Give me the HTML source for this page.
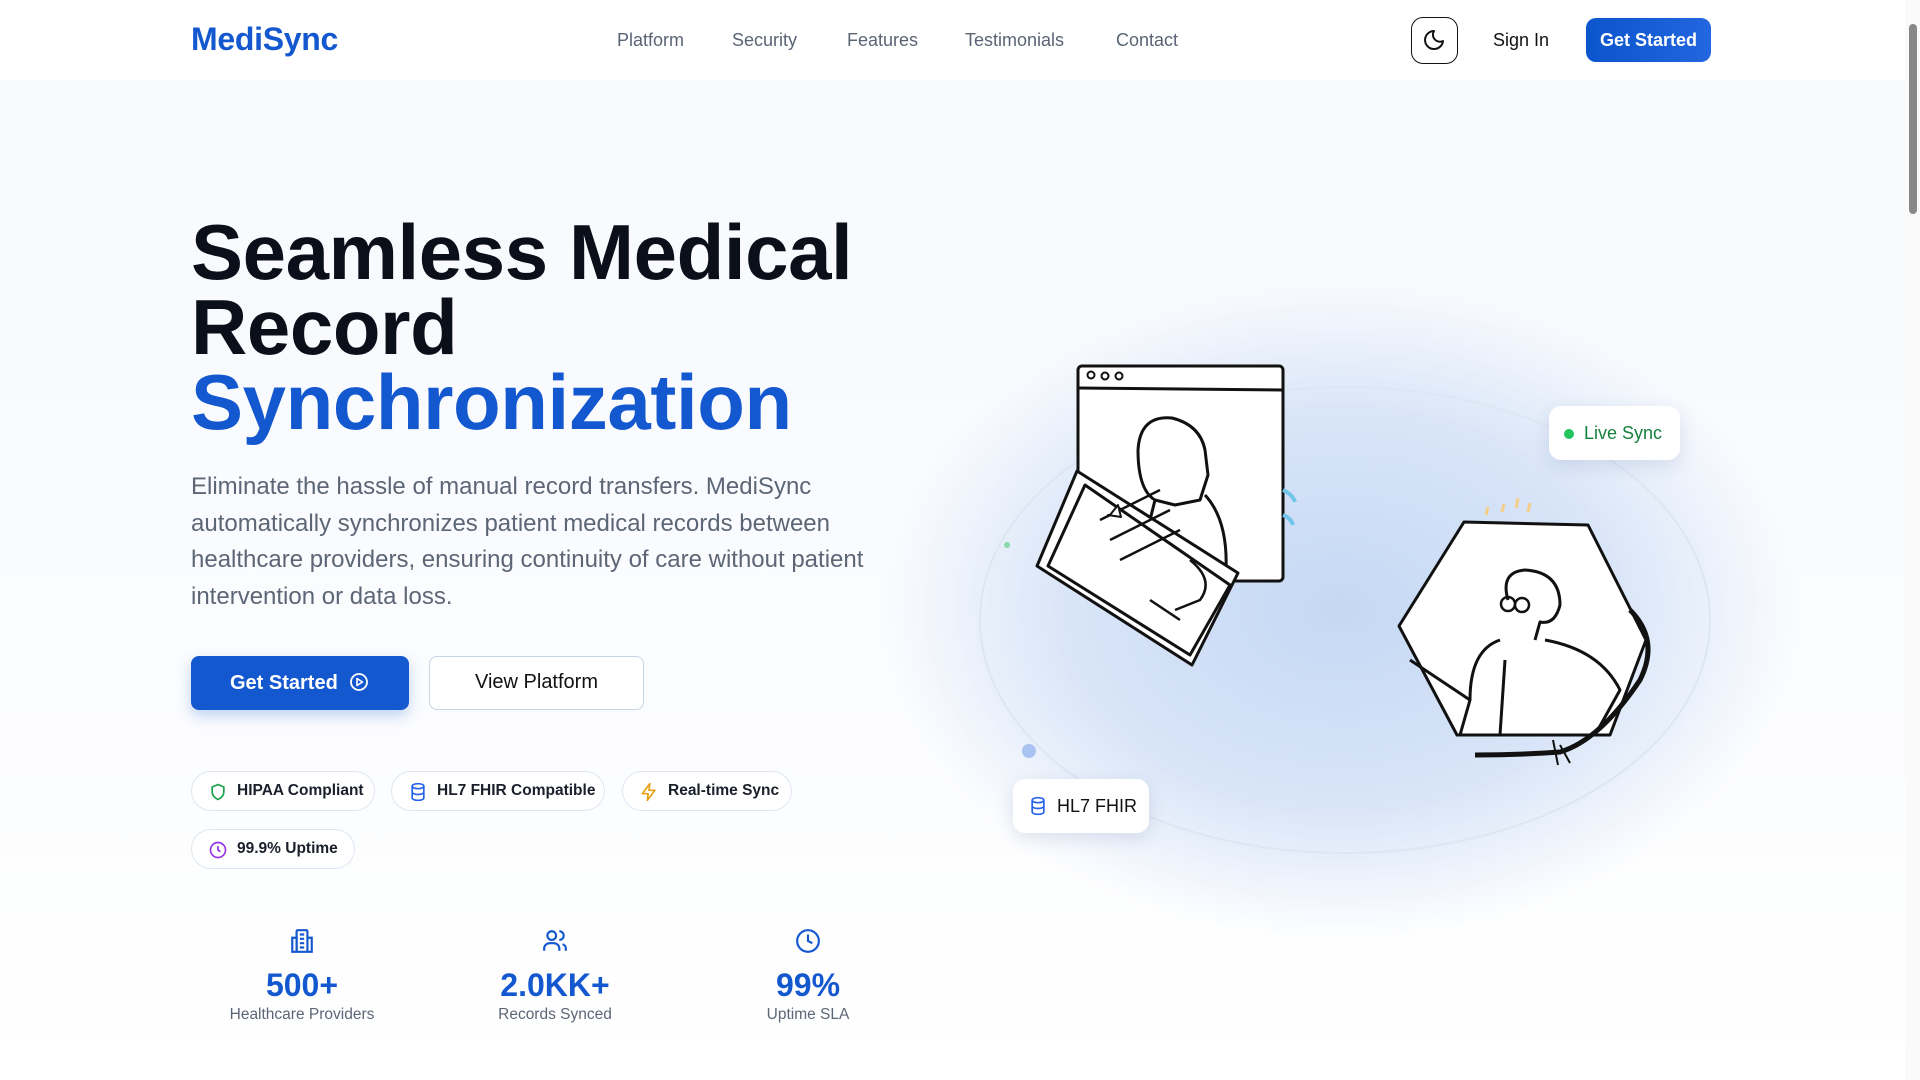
<!DOCTYPE html>
<html><head><meta charset="utf-8"><style>
*{margin:0;padding:0;box-sizing:border-box}
html,body{width:1920px;height:1080px;overflow:hidden}
body{font-family:"Liberation Sans",sans-serif;background:#fff;position:relative;color:#0f172a}
.bg{position:absolute;left:0;top:80px;width:1905px;height:1000px;background:linear-gradient(180deg,#f7f9fd 0%,#fbfcfe 60%,#fff 100%)}
.scroll{position:absolute;right:0;top:0;width:15px;height:1080px;background:#fafafa}
.scroll .th{position:absolute;left:4px;top:24px;width:8px;height:190px;background:#888;border-radius:4px}
nav{position:absolute;left:0;top:0;width:1905px;height:80px;background:#fff}
.logo{position:absolute;left:191px;top:21px;font-size:32px;font-weight:bold;color:#1458d0;letter-spacing:-0.3px}
.links a{position:absolute;top:30px;font-size:18px;color:#5b6475;text-decoration:none}
.moon{position:absolute;left:1411px;top:17px;width:47px;height:47px;border:1.5px solid #111;border-radius:12px}
.signin{position:absolute;left:1493px;top:30px;font-size:18px;color:#111}
.gs{position:absolute;left:1586px;top:18px;width:125px;height:44px;border-radius:10px;background:linear-gradient(90deg,#0b55cc,#2266e0);color:#fff;font-size:18px;font-weight:bold;text-align:center;line-height:44px}
h1{position:absolute;left:191px;top:215px;font-size:78px;line-height:75px;font-weight:bold;letter-spacing:-0.4px;color:#0b0f1a}
h1 span{color:#1458d0}
.p{position:absolute;left:191px;top:469px;font-size:24px;line-height:36.7px;color:#5d6676;white-space:nowrap}
.b1{position:absolute;left:191px;top:656px;width:218px;height:54px;border-radius:8px;background:#1458d0;color:#fff;font-size:20px;font-weight:bold;line-height:54px;padding-left:39px;box-shadow:0 6px 14px rgba(20,88,208,.25)}
.b2{position:absolute;left:429px;top:656px;width:215px;height:54px;border-radius:8px;border:1.5px solid #c8d3e6;background:#fff;font-size:20px;line-height:51px;text-align:center;color:#111}
.chip{position:absolute;height:40px;border:1px solid #dfe6f2;border-radius:20px;background:#fff;font-size:15.5px;font-weight:bold;color:#1a1f2b;line-height:38px;padding-left:45px}
.chip svg{position:absolute;left:16px;top:10px}
.stat{position:absolute;width:240px;text-align:center}
.stat .n{font-size:32px;font-weight:bold;color:#1458d0;margin-top:8px}
.stat .l{font-size:15.5px;color:#5d6676;margin-top:2px}
.card{position:absolute;background:#fff;border-radius:12px;box-shadow:0 6px 18px rgba(30,60,120,.12);font-size:18px}
</style></head><body>
<div class="bg"></div>
<svg style="position:absolute;left:0;top:0" width="1905" height="1080">
<defs>
<radialGradient id="g" cx="0.5" cy="0.5" r="0.5"><stop offset="0" stop-color="#c5d8f4"/><stop offset="0.6" stop-color="#d9e5f8"/><stop offset="1" stop-color="#dbe7f8" stop-opacity="0"/></radialGradient>
</defs>
<ellipse cx="1340" cy="610" rx="460" ry="330" fill="url(#g)"/>
<ellipse cx="1345" cy="620" rx="365" ry="233" fill="none" stroke="#dde6f3" stroke-width="2"/>
<circle cx="1007" cy="545" r="3" fill="#86dba6"/>
<circle cx="1029" cy="751" r="7" fill="#a9c3f2"/>
<g stroke="#111" stroke-width="3" fill="#fff" stroke-linejoin="round">
<rect x="1078" y="366" width="205" height="215" rx="4"/>
<line x1="1078" y1="388" x2="1283" y2="390"/>
<circle cx="1091" cy="375" r="3.5" stroke-width="2"/><circle cx="1105" cy="376" r="3.5" stroke-width="2"/><circle cx="1119" cy="376" r="3.5" stroke-width="2"/>
<path d="M1138 450 Q1140 415 1172 418 Q1200 425 1205 450 L1208 475 L1200 500 L1175 505 L1155 500 Q1138 490 1138 450Z"/>
<path d="M1155 500 L1140 560 M1205 495 Q1228 520 1226 570" fill="none"/>
<polygon points="1037,566 1077,471 1238,573 1192,665"/>
<polygon points="1048,566 1085,485 1230,585 1190,655"/>
<path d="M1100 520 L1160 490 M1110 540 L1170 510 M1120 560 L1180 530 M1190 560 Q1215 580 1200 600 L1175 610 M1150 600 L1180 620" fill="none" stroke-width="2.5"/>
<path d="M1110 515 l8 -10 l3 12 l-13 -2z" stroke-width="2"/>
</g>
<path d="M1283 490 q10 5 12 12 M1283 515 q8 3 10 10" stroke="#6fc6ea" stroke-width="4" fill="none"/>
<g stroke="#111" stroke-width="3" fill="#fff" stroke-linejoin="round">
<polygon points="1464,522 1588,525 1646,640 1610,735 1457,735 1399,626"/>
<path d="M1508 600 Q1500 572 1525 570 Q1560 572 1560 605 Q1555 625 1540 622 L1535 640" fill="none"/>
<circle cx="1508" cy="604" r="7" stroke-width="2.5" fill="none"/><circle cx="1522" cy="605" r="7" stroke-width="2.5" fill="none"/>
<path d="M1500 640 Q1470 650 1470 700 L1460 735 M1545 640 Q1600 650 1620 690 L1595 735 M1505 660 L1500 735 M1410 660 Q1440 680 1470 700" fill="none"/>
<path d="M1630 610 Q1660 640 1640 680 Q1600 740 1560 752 Q1520 755 1475 755" fill="none" stroke-width="5"/>
<path d="M1553 740 l5 25 M1560 745 l10 18" fill="none" stroke-width="2"/>
</g>
<path d="M1486 515 l2 -8 M1502 512 l2 -8 M1516 508 l2 -10 M1528 512 l2 -9" stroke="#f3cf8a" stroke-width="3"/>
</svg>
<nav>
<div class="logo">MediSync</div>
<div class="links"><a style="left:617px">Platform</a><a style="left:732px">Security</a><a style="left:847px">Features</a><a style="left:965px">Testimonials</a><a style="left:1116px">Contact</a></div>
<div class="moon"><svg width="44" height="44" viewBox="0 0 44 44" style="position:absolute;left:0;top:0"><path d="M22 13 a9 9 0 1 0 9 10 a7 7 0 0 1 -9 -10z" fill="none" stroke="#111" stroke-width="2" stroke-linejoin="round"/></svg></div>
<div class="signin">Sign In</div>
<div class="gs">Get Started</div>
</nav>
<h1>Seamless Medical<br>Record<br><span>Synchronization</span></h1>
<div class="p">Eliminate the hassle of manual record transfers. MediSync<br>automatically synchronizes patient medical records between<br>healthcare providers, ensuring continuity of care without patient<br>intervention or data loss.</div>
<div class="b1">Get Started <svg width="20" height="20" viewBox="0 0 20 20" style="vertical-align:-3px;margin-left:6px"><circle cx="10" cy="10" r="8" fill="none" stroke="#fff" stroke-width="1.8"/><path d="M8 6.5v7l5.5-3.5z" fill="none" stroke="#fff" stroke-width="1.6" stroke-linejoin="round"/></svg></div>
<div class="b2">View Platform</div>
<div class="chip" style="left:191px;top:771px;width:184px"><svg width="20" height="20" viewBox="0 0 24 24"><path d="M12 3l7 3v6c0 4-3 7-7 9c-4-2-7-5-7-9V6z" fill="none" stroke="#16a34a" stroke-width="2"/></svg>HIPAA Compliant</div>
<div class="chip" style="left:391px;top:771px;width:214px"><svg width="20" height="20" viewBox="0 0 24 24" fill="none" stroke="#2563eb" stroke-width="2"><ellipse cx="12" cy="5" rx="7" ry="3"/><path d="M5 5v14c0 1.7 3 3 7 3s7-1.3 7-3V5M5 12c0 1.7 3 3 7 3s7-1.3 7-3"/></svg>HL7 FHIR Compatible</div>
<div class="chip" style="left:622px;top:771px;width:170px"><svg width="20" height="20" viewBox="0 0 24 24"><path d="M13 2L4 14h7l-1 8 9-12h-7z" fill="none" stroke="#e6a117" stroke-width="2" stroke-linejoin="round"/></svg>Real-time Sync</div>
<div class="chip" style="left:191px;top:829px;width:164px"><svg width="20" height="20" viewBox="0 0 24 24" fill="none" stroke="#9333ea" stroke-width="2"><circle cx="12" cy="12" r="9"/><path d="M12 7v5l3 2"/></svg>99.9% Uptime</div>
<div class="stat" style="left:182px;top:928px"><svg width="26" height="26" viewBox="0 0 24 24" fill="none" stroke="#1458d0" stroke-width="2"><rect x="7" y="2" width="10" height="20" rx="1"/><path d="M3 9h4v13H3zM17 9h4v13h-4M10 6h4M10 10h4M10 14h4M10 18h4"/></svg><div class="n">500+</div><div class="l">Healthcare Providers</div></div>
<div class="stat" style="left:435px;top:928px"><svg width="26" height="26" viewBox="0 0 24 24" fill="none" stroke="#1458d0" stroke-width="2"><circle cx="9" cy="7" r="4"/><path d="M2 21v-2a5 5 0 0 1 5-5h4a5 5 0 0 1 5 5v2M16 3a4 4 0 0 1 0 8M22 21v-2a4 4 0 0 0-3-4"/></svg><div class="n">2.0KK+</div><div class="l">Records Synced</div></div>
<div class="stat" style="left:688px;top:928px"><svg width="26" height="26" viewBox="0 0 24 24" fill="none" stroke="#1458d0" stroke-width="2"><circle cx="12" cy="12" r="10"/><path d="M12 6v6l4 2"/></svg><div class="n">99%</div><div class="l">Uptime SLA</div></div>
<div class="card" style="left:1549px;top:406px;width:131px;height:54px;color:#15803d;line-height:54px;padding-left:35px"><span style="position:absolute;left:15px;top:23px;width:10px;height:10px;border-radius:5px;background:#22c55e"></span>Live Sync</div>
<div class="card" style="left:1013px;top:779px;width:136px;height:54px;line-height:54px;padding-left:44px;color:#111"><svg width="20" height="22" viewBox="0 0 24 24" fill="none" stroke="#2563eb" stroke-width="2" style="position:absolute;left:15px;top:16px"><ellipse cx="12" cy="5" rx="7" ry="3"/><path d="M5 5v14c0 1.7 3 3 7 3s7-1.3 7-3V5M5 12c0 1.7 3 3 7 3s7-1.3 7-3"/></svg>HL7 FHIR</div>
<div class="scroll"><div class="th"></div></div>
</body></html>
